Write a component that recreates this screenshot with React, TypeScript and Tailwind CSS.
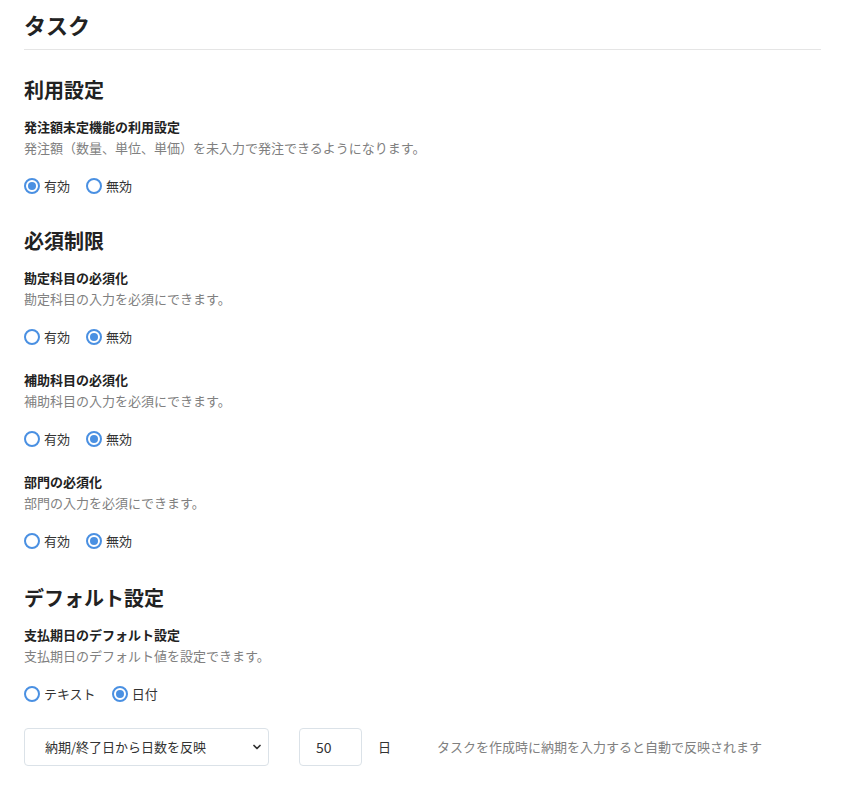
import { useState } from 'react';

type Option = { value: string; label: string };

const enableOptions: Option[] = [
  { value: 'on', label: '有効' },
  { value: 'off', label: '無効' },
];

function RadioGroup({
  name,
  options,
  value,
  onChange,
}: {
  name: string;
  options: Option[];
  value: string;
  onChange: (v: string) => void;
}) {
  return (
    <div className="flex items-center gap-4 h-5">
      {options.map((opt) => {
        const checked = opt.value === value;
        return (
          <label key={opt.value} className="flex items-center gap-1 cursor-pointer">
            <input
              type="radio"
              name={name}
              className="sr-only"
              checked={checked}
              onChange={() => onChange(opt.value)}
            />
            <span className="flex items-center justify-center w-4 h-4 rounded-full border-2 border-[#4a90e2] bg-white">
              {checked && <span className="w-2 h-2 rounded-full bg-[#4a90e2]" />}
            </span>
            <span className="text-[13px] leading-5 text-[#333]">{opt.label}</span>
          </label>
        );
      })}
    </div>
  );
}

function Setting({
  title,
  description,
  children,
}: {
  title: string;
  description: string;
  children: React.ReactNode;
}) {
  return (
    <div>
      <p className="text-[13px] leading-5 font-bold text-[#222]">{title}</p>
      <p className="mt-px text-[13px] leading-5 text-[#808080]">{description}</p>
      <div className="mt-[18px]">{children}</div>
    </div>
  );
}

export default function App() {
  const [undecided, setUndecided] = useState('on');
  const [account, setAccount] = useState('off');
  const [subAccount, setSubAccount] = useState('off');
  const [department, setDepartment] = useState('off');
  const [dueType, setDueType] = useState('date');
  const [days, setDays] = useState('50');

  return (
    <div
      className="min-h-screen bg-white px-6 text-[#333]"
      style={{ fontFamily: '"Noto Sans CJK JP", "Noto Sans", sans-serif' }}
    >
      <div className="w-[797px]">
        <h1 className="pt-2 pb-2 text-[22px] leading-[33px] font-bold text-[#222] border-b border-[#e5e5e5]">
          タスク
        </h1>

        <section className="mt-[25px]">
          <h2 className="text-[20px] leading-[30px] font-bold text-[#222]">利用設定</h2>
          <div className="mt-3">
            <Setting
              title="発注額未定機能の利用設定"
              description="発注額（数量、単位、単価）を未入力で発注できるようになります。"
            >
              <RadioGroup
                name="undecided"
                options={enableOptions}
                value={undecided}
                onChange={setUndecided}
              />
            </Setting>
          </div>
        </section>

        <section className="mt-[30px]">
          <h2 className="text-[20px] leading-[30px] font-bold text-[#222]">必須制限</h2>
          <div className="mt-3 flex flex-col gap-[23px]">
            <Setting title="勘定科目の必須化" description="勘定科目の入力を必須にできます。">
              <RadioGroup name="account" options={enableOptions} value={account} onChange={setAccount} />
            </Setting>
            <Setting title="補助科目の必須化" description="補助科目の入力を必須にできます。">
              <RadioGroup
                name="subAccount"
                options={enableOptions}
                value={subAccount}
                onChange={setSubAccount}
              />
            </Setting>
            <Setting title="部門の必須化" description="部門の入力を必須にできます。">
              <RadioGroup
                name="department"
                options={enableOptions}
                value={department}
                onChange={setDepartment}
              />
            </Setting>
          </div>
        </section>

        <section className="mt-[32px] pb-5">
          <h2 className="text-[20px] leading-[30px] font-bold text-[#222]">デフォルト設定</h2>
          <div className="mt-3">
            <Setting title="支払期日のデフォルト設定" description="支払期日のデフォルト値を設定できます。">
              <RadioGroup
                name="dueType"
                options={[
                  { value: 'text', label: 'テキスト' },
                  { value: 'date', label: '日付' },
                ]}
                value={dueType}
                onChange={setDueType}
              />
            </Setting>

            <div className="mt-6 flex items-center">
              <div className="relative w-[245px]">
                <select
                  defaultValue="delivery"
                  className="appearance-none w-full h-[38px] rounded border border-[#dbe2e8] bg-white pl-5 pr-8 text-[13px] text-[#333] outline-none"
                >
                  <option value="delivery">納期/終了日から日数を反映</option>
                  <option value="month">月末締め翌月末払い</option>
                </select>
                <svg
                  className="pointer-events-none absolute right-[6px] top-1/2 -translate-y-1/2 w-3 h-3 text-[#333]"
                  viewBox="0 0 24 24"
                  fill="none"
                  stroke="currentColor"
                  strokeWidth={3.5}
                  strokeLinecap="round"
                  strokeLinejoin="round"
                >
                  <path d="M6 9l6 6 6-6" />
                </svg>
              </div>
              <input
                type="text"
                value={days}
                onChange={(e) => setDays(e.target.value)}
                className="ml-[30px] w-[63px] h-[38px] rounded border border-[#dbe2e8] px-4 text-[14px] text-[#333] outline-none"
              />
              <span className="ml-[16px] text-[13px] text-[#333]">日</span>
              <span className="ml-[46px] text-[13px] text-[#808080]">
                タスクを作成時に納期を入力すると自動で反映されます
              </span>
            </div>
          </div>
        </section>
      </div>
    </div>
  );
}
